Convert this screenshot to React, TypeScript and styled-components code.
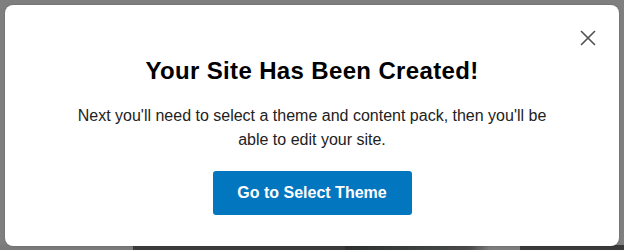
import React from "react";
import styled, { createGlobalStyle } from "styled-components";

const Global = createGlobalStyle`
  html, body { margin: 0; padding: 0; }
  body {
    width: 624px;
    height: 250px;
    overflow: hidden;
    font-family: "Liberation Sans", Arial, sans-serif;
  }
`;

const Backdrop = styled.div`
  width: 624px;
  height: 250px;
  box-sizing: border-box;
  padding: 5px 5px 4px 5px;
  background:
    linear-gradient(to right,
      #7b7b7b 0, #7b7b7b 133px,
      #3b3b3b 133px, #3b3b3b 345px,
      #2e3131 345px, #4a4c4c 470px,
      #7d7d7d 490px, #7d7d7d 520px,
      #3a3a3a 520px) bottom / 100% 5px no-repeat,
    #7f7f7f;
`;

const Modal = styled.div`
  position: relative;
  height: 100%;
  background: #ffffff;
  border-radius: 8px;
  display: flex;
  flex-direction: column;
  align-items: center;
  padding-top: 53px;
  box-sizing: border-box;
  box-shadow: 0 0 2px rgba(0, 0, 0, 0.25);
`;

const CloseButton = styled.button`
  position: absolute;
  top: 18px;
  right: 16px;
  width: 30px;
  height: 30px;
  border: none;
  background: transparent;
  padding: 0;
  display: flex;
  align-items: center;
  justify-content: center;
  cursor: pointer;
`;

const Title = styled.h2`
  margin: 0;
  font-size: 24px;
  line-height: 26px;
  letter-spacing: 0.35px;
  font-weight: 700;
  color: #000000;
`;

const Message = styled.p`
  margin: 20px 0 0;
  width: 490px;
  text-align: center;
  font-size: 16px;
  line-height: 24px;
  color: #222222;
`;

const PrimaryButton = styled.button`
  margin-top: 19px;
  width: 199px;
  height: 44px;
  border: none;
  border-radius: 3px;
  background: #0276bf;
  color: #ffffff;
  font-family: "Liberation Sans", Arial, sans-serif;
  font-size: 16px;
  font-weight: 700;
  cursor: pointer;
`;

export default function App() {
  return (
    <>
      <Global />
      <Backdrop>
        <Modal>
          <CloseButton aria-label="Close">
            <svg width="16" height="16" viewBox="0 0 16 16">
              <path d="M1.5 1.5 L14.5 14.5 M14.5 1.5 L1.5 14.5" stroke="#555" strokeWidth="1.7" strokeLinecap="round" />
            </svg>
          </CloseButton>
          <Title>Your Site Has Been Created!</Title>
          <Message>
            Next you'll need to select a theme and content pack, then you'll be able to edit your site.
          </Message>
          <PrimaryButton>Go to Select Theme</PrimaryButton>
        </Modal>
      </Backdrop>
    </>
  );
}
